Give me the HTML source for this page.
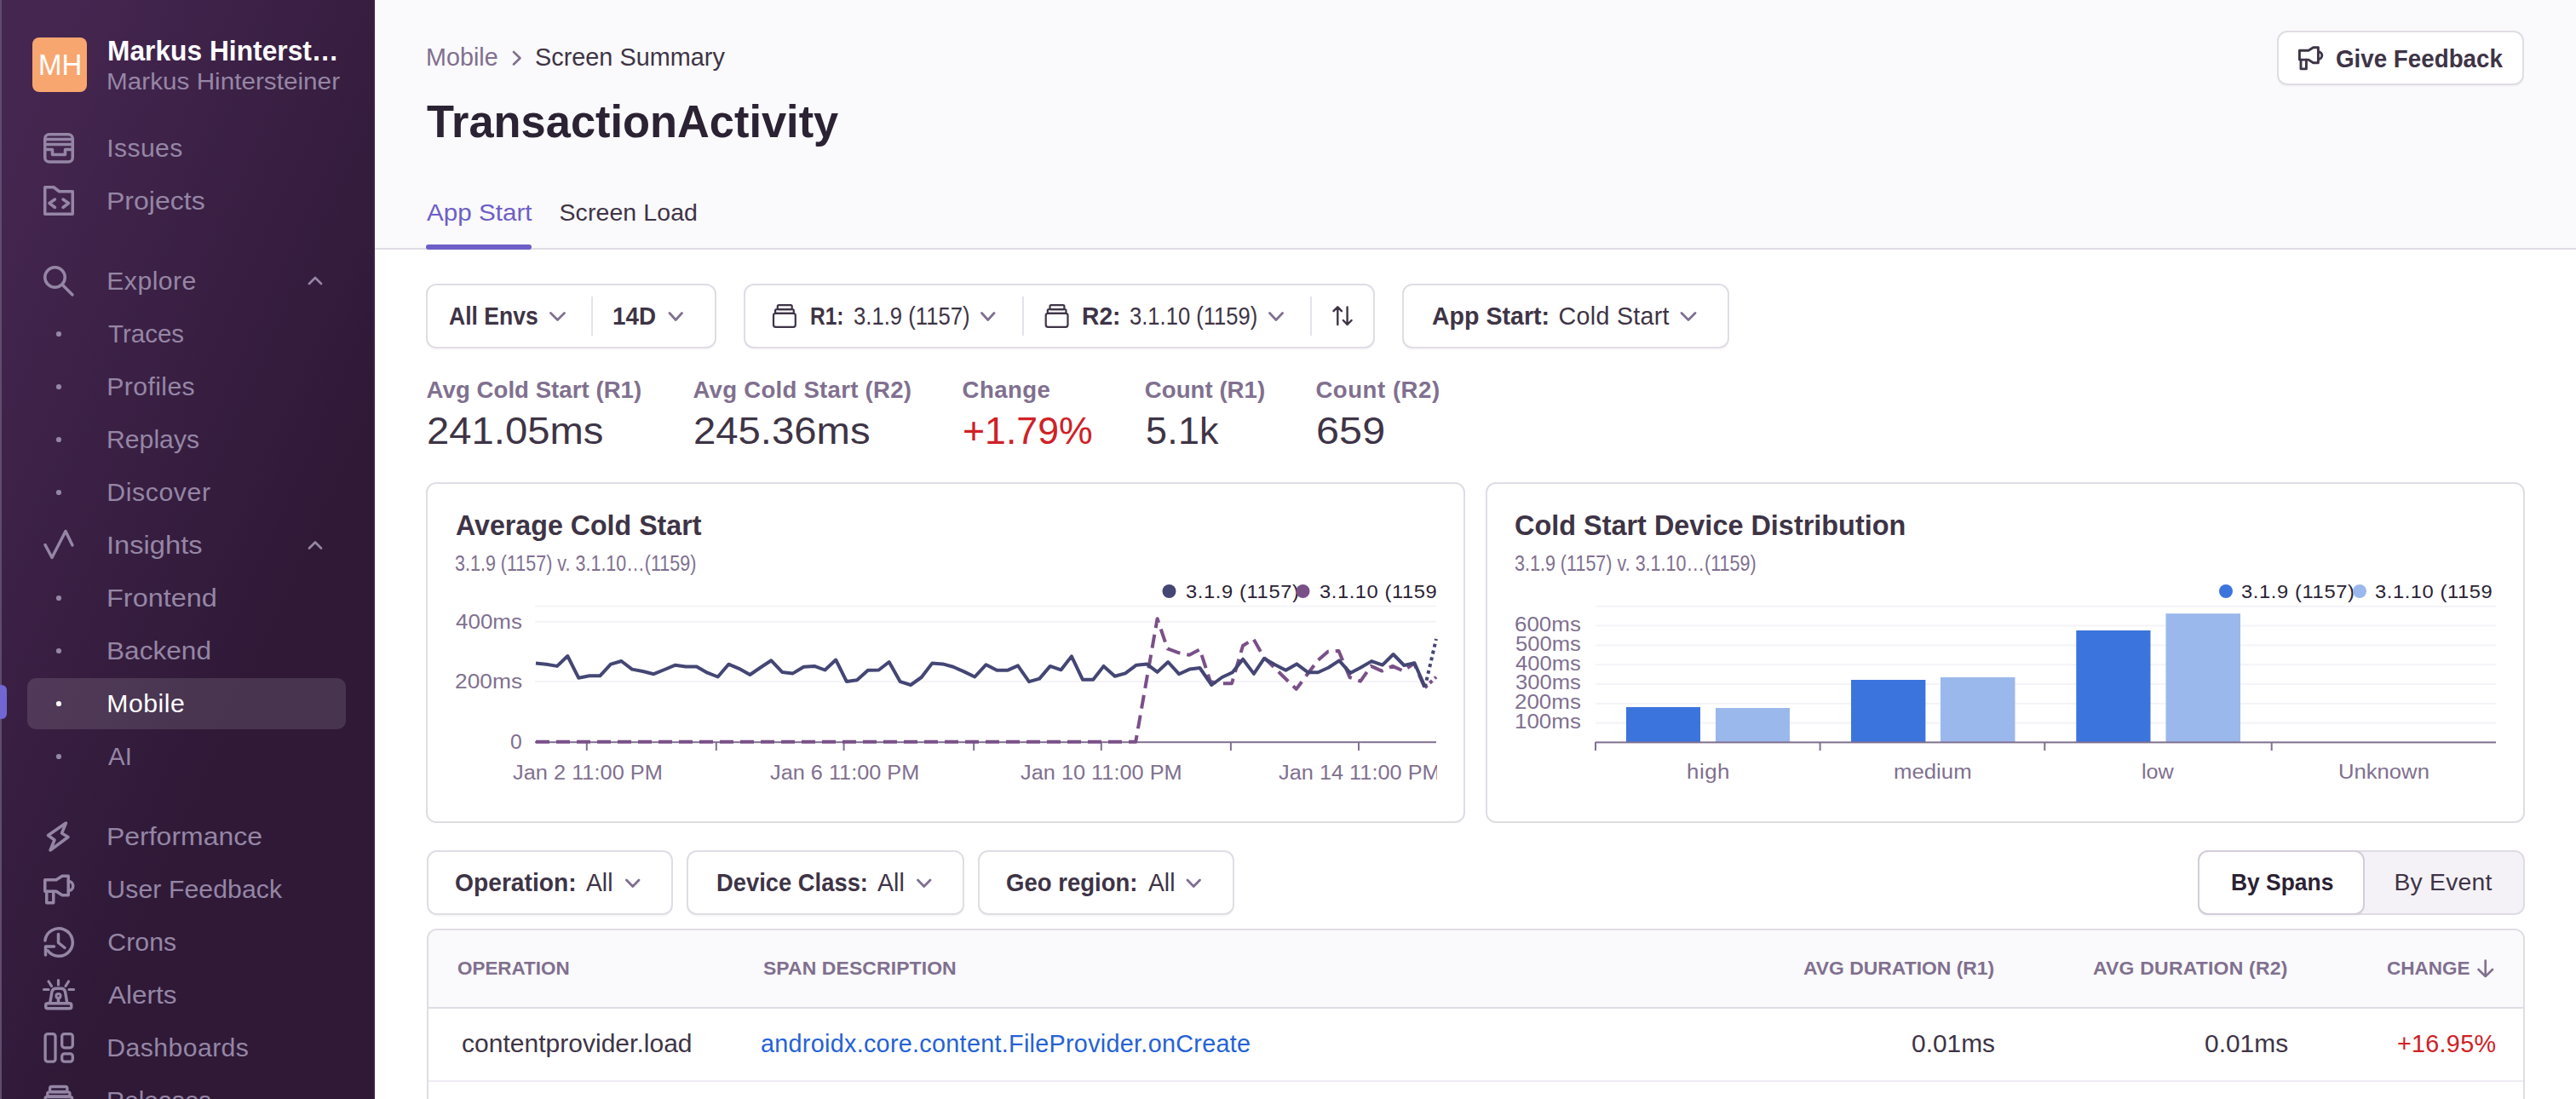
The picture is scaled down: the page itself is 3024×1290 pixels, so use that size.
<!DOCTYPE html>
<html><head><meta charset="utf-8"><title>TransactionActivity</title>
<style>
html,body{margin:0;padding:0;}
body{width:3024px;height:1290px;overflow:hidden;position:relative;background:#ffffff;font-family:"Liberation Sans",sans-serif;}
.t{position:absolute;white-space:nowrap;}
.ov{position:absolute;left:0;top:0;z-index:2;pointer-events:none;}
.box{position:absolute;box-sizing:border-box;border:2px solid #e0dce5;border-radius:12px;background:#fff;}
.btn{box-shadow:0 2px 1px rgba(43,34,51,0.03);}

</style></head>
<body>
<div style="position:absolute;left:0;top:0;width:440px;height:1290px;background:linear-gradient(294.17deg,#2f1937 35.57%,#452650 92.42%,#452650 92.42%);"></div>
<div style="position:absolute;left:0;top:0;width:2px;height:1290px;background:#5f4c6e;"></div>
<div style="position:absolute;left:438px;top:0;width:2px;height:1290px;background:#3a2145;"></div>
<div style="position:absolute;left:38px;top:44px;width:64px;height:64px;border-radius:8px;background:#f8a670;"></div>
<div style="position:absolute;left:32px;top:796px;width:374px;height:60px;border-radius:10px;background:rgba(255,255,255,0.12);"></div>
<div style="position:absolute;left:0;top:804px;width:8px;height:40px;border-radius:0 6px 6px 0;background:#7266d4;"></div>
<div style="position:absolute;left:440px;top:0;width:2584px;height:291px;background:#faf9fb;"></div>
<div style="position:absolute;left:440px;top:291px;width:2584px;height:2px;background:#e0dce5;"></div>
<div style="position:absolute;left:500px;top:287px;width:124px;height:6px;border-radius:3px;background:#6c5fc7;"></div>
<div class="box btn" style="left:2673px;top:36px;width:290px;height:64px;"></div>
<div class="box btn" style="left:500px;top:333px;width:341px;height:76px;"></div>
<div class="box btn" style="left:873px;top:333px;width:741px;height:76px;"></div>
<div class="box btn" style="left:1646px;top:333px;width:384px;height:76px;"></div>
<div class="box" style="left:500px;top:566px;width:1220px;height:400px;"></div>
<div class="box" style="left:1744px;top:566px;width:1220px;height:400px;"></div>
<div class="box btn" style="left:501px;top:998px;width:289px;height:76px;"></div>
<div class="box btn" style="left:806px;top:998px;width:326px;height:76px;"></div>
<div class="box btn" style="left:1148px;top:998px;width:301px;height:76px;"></div>
<div class="box" style="left:2580px;top:998px;width:384px;height:76px;background:#f4f2f6;"></div>
<div class="box btn" style="left:2580px;top:998px;width:196px;height:76px;border-color:#d3cdd9;"></div>
<div class="box" style="left:501px;top:1090px;width:2463px;height:260px;border-radius:12px;"></div>
<div style="position:absolute;left:503px;top:1092px;width:2459px;height:91px;border-radius:10px 10px 0 0;background:#faf9fb;"></div>
<div style="position:absolute;left:503px;top:1182px;width:2459px;height:2px;background:#e0dce5;"></div>
<div style="position:absolute;left:503px;top:1268px;width:2459px;height:2px;background:#f0ecf3;"></div>

<svg class="ov" width="3024" height="1290" viewBox="0 0 3024 1290">
<g fill="none" stroke="#9586a5" stroke-width="3.5" stroke-linecap="round" stroke-linejoin="round">
<rect x="52.75" y="157.75" width="32.5" height="32.25" rx="5"/>
<path d="M52.75 163.5H85.25M52.75 169.5H85.25M52.75 175.5H61.5V181.5H76.5V175.5H85.25"/>
<path d="M52.75 251.25V219.75H63L69.5 224.75H85.25V251.25Z"/>
<path d="M64.5 234L58 238.5L64.5 243.5M74 234L80.5 238.5L74 243.5"/>
<circle cx="64.5" cy="325.5" r="11.75"/><path d="M73.5 334.5L85 346"/>
<path d="M53 639.5L61 654.5L77 623.5L85 640"/>
<path d="M77.5 966L56.5 980.5L64 986L59 998L80 982.5L72.5 978Z"/>
<path d="M52.75 1032.75H66L73 1028.25H80.25V1050.75H73L66 1046.25H52.75Z"/><path d="M54.75 1046.25V1059.75H62.75V1046.25"/><path d="M80.25 1034.5A5.5 5.5 0 0 1 80.25 1045.5"/>
<path d="M52.9 1104A16.25 16.25 0 1 1 56 1115.8"/><path d="M53.5 1121V1111H63.5"/><path d="M68.5 1096.5V1106.5L76 1112.5"/>
<rect x="53.75" y="1177.75" width="30" height="6" rx="2"/><path d="M58.75 1177L61 1164Q61.8 1160.25 66 1160.25H71.5Q75.7 1160.25 76.5 1164L78.75 1177"/><circle cx="68.5" cy="1169" r="2.6" stroke-width="3"/><path d="M68.5 1172V1176"/>
<path d="M51.5 1161.5H57M81 1161.5H86.5M57 1152L60.5 1157.5M68.5 1150.5V1156M80.5 1152L77 1157.5" stroke-width="3.2"/>
</g>
<g fill="none" stroke="#9586a5" stroke-width="3.3">
<rect x="53.1" y="1213.6" width="11.9" height="32.6" rx="3"/><rect x="72.7" y="1213.6" width="12.6" height="16.2" rx="3"/><rect x="72.7" y="1236.9" width="12.6" height="9.3" rx="3"/>
<rect x="58.6" y="1275.5" width="20.3" height="6" rx="2"/><rect x="55.7" y="1281.8" width="26.3" height="5" rx="2"/><rect x="53.1" y="1287.5" width="31.5" height="10" rx="2"/>
</g>
<circle cx="69" cy="392" r="3.1" fill="#9586a5"/>
<circle cx="69" cy="454" r="3.1" fill="#9586a5"/>
<circle cx="69" cy="516" r="3.1" fill="#9586a5"/>
<circle cx="69" cy="578" r="3.1" fill="#9586a5"/>
<circle cx="69" cy="702" r="3.1" fill="#9586a5"/>
<circle cx="69" cy="764" r="3.1" fill="#9586a5"/>
<circle cx="69" cy="888" r="3.1" fill="#9586a5"/>
<circle cx="69" cy="826" r="3.1" fill="#ffffff"/>
<path d="M363 333L370 326L377 333M363 643.5L370 636.5L377 643.5" fill="none" stroke="#9586a5" stroke-width="2.7" stroke-linecap="round" stroke-linejoin="round"/>
<path d="M603 61L610.5 68.2L603 75.5" fill="none" stroke="#80708f" stroke-width="2.6" stroke-linecap="round" stroke-linejoin="round"/>
<g transform="translate(2698 54.3) scale(0.8) translate(-51 -1026.5)" fill="none" stroke="#3e3446" stroke-width="3.6" stroke-linecap="round" stroke-linejoin="round"><path d="M52.75 1032.75H66L73 1028.25H80.25V1050.75H73L66 1046.25H52.75Z"/><path d="M54.75 1046.25V1059.75H62.75V1046.25"/><path d="M80.25 1034.5A5.5 5.5 0 0 1 80.25 1045.5"/></g>
<path d="M646.5 367.5L654.5 375.5L662.5 367.5 M786 367.5L793.25 375.5L800.5 367.5 M1152.5 367.5L1159.75 375.5L1167 367.5 M1490.5 367.5L1498.0 375.5L1505.5 367.5 M1974 367.5L1982.0 375.5L1990 367.5 M735.5 1033L742.75 1040.5L750 1033 M1077.5 1033L1084.75 1040.5L1092 1033 M1394 1033L1401.25 1040.5L1408.5 1033" fill="none" stroke="#80708f" stroke-width="2.8" stroke-linecap="round" stroke-linejoin="round"/>
<rect x="694" y="348" width="2" height="46" fill="#e6e2ea"/>
<rect x="1200" y="348" width="2" height="46" fill="#e6e2ea"/>
<rect x="1538" y="348" width="2" height="46" fill="#e6e2ea"/>
<g fill="none" stroke="#3e3446" stroke-width="2.2" stroke-linejoin="round"><rect x="912.8" y="358.1" width="16.9" height="5" rx="1.5"/><rect x="910.1" y="363.1" width="21.7" height="4.7" rx="1.5"/><rect x="908" y="367.8" width="25.8" height="16" rx="2.5"/></g>
<g fill="none" stroke="#3e3446" stroke-width="2.2" stroke-linejoin="round"><rect x="1232.5" y="358.1" width="16.9" height="5" rx="1.5"/><rect x="1229.8" y="363.1" width="21.7" height="4.7" rx="1.5"/><rect x="1227.7" y="367.8" width="25.8" height="16" rx="2.5"/></g>
<path d="M1570.3 381V360.5M1565.5 365.2L1570.3 360.3L1575 365.2M1581.6 360.5V381M1576.8 376L1581.6 381L1586.6 376" fill="none" stroke="#3e3446" stroke-width="2.4" stroke-linecap="round" stroke-linejoin="round"/>
<rect x="628" y="710.5" width="1058" height="2" fill="#f5f3f7"/>
<rect x="628" y="728.8" width="1058" height="2" fill="#f5f3f7"/>
<rect x="628" y="799" width="1058" height="2" fill="#f5f3f7"/>
<rect x="628" y="870.2" width="1058" height="2" fill="#80708f"/>
<rect x="687.8" y="871" width="2" height="10" fill="#80708f"/>
<rect x="839.8" y="871" width="2" height="10" fill="#80708f"/>
<rect x="989.6" y="871" width="2" height="10" fill="#80708f"/>
<rect x="1142.2" y="871" width="2" height="10" fill="#80708f"/>
<rect x="1291.8" y="871" width="2" height="10" fill="#80708f"/>
<rect x="1443.9" y="871" width="2" height="10" fill="#80708f"/>
<rect x="1594" y="871" width="2" height="10" fill="#80708f"/>
<polyline points="629,870.8 1333.2,870.8 1358.6,726.2 1370.5,761.4 1384,766.3 1396.3,768.8 1408.5,762.2 1420.8,800 1433,802.3 1446,802.3 1459,758 1471.4,750 1484,772 1521.7,808.9 1546.9,775.3 1559,764.7 1571.5,763.9 1584.4,795 1597,799.6 1609.6,781.9 1622.2,787.6 1634.8,781.9 1647.4,787.6 1660,778.6 1672.6,807.3" fill="none" stroke="#7a5088" stroke-width="4" stroke-dasharray="16 8" stroke-linejoin="round"/>
<polyline points="1672.6,807.3 1686,794.6" fill="none" stroke="#7a5088" stroke-width="4" stroke-dasharray="4 4"/>
<polyline points="629,778.6 641.3,779.7 654,781.9 666.3,770 679.3,795.8 692,793.3 704.3,793.3 717,779.7 729.4,776 742,785.6 754.6,788 767.4,791.2 780,786 792.8,780.7 805,782.4 817.8,782.4 830.4,789.7 842.7,794.5 855.3,779.7 867.6,784.8 880.4,792 892.8,783.5 905.4,775.3 918.2,788.9 930.8,790.4 943.5,782.7 956.1,781.9 968.4,786.5 981.2,774.5 993.8,799.9 1006.1,798.2 1018.9,786.8 1031.5,786.5 1043.7,777 1056.8,800.2 1069.1,804 1081.7,795 1094.2,778.6 1106.8,779.4 1119,782.7 1131.7,788.4 1144.3,794.5 1157.6,780.2 1170.3,786.8 1182.6,786.8 1194.9,781.4 1208,800.2 1220.2,796.6 1232.8,781.9 1245.6,786.3 1257.9,770.4 1271,797.8 1283.3,797.8 1295.6,781.9 1308.7,793.8 1321,790.4 1334,780.7 1346.3,779.4 1358.6,788.9 1371.2,777 1384,791.2 1396.3,785.6 1408.5,784 1422.3,804 1434.6,795 1446.8,789.2 1459.1,773.7 1471.9,790.9 1484,772.9 1496.8,780.2 1509.4,786.8 1522.2,779.4 1535.3,789.2 1547.2,789.2 1559.8,783.5 1572.1,775.3 1585.2,790.1 1597.5,783.5 1610.1,776.1 1622.9,780.6 1635.6,768 1648.3,781 1660.5,778.3 1672.8,806.4" fill="none" stroke="#444674" stroke-width="4" stroke-linejoin="round"/>
<polyline points="1672.8,806.4 1686,750" fill="none" stroke="#444674" stroke-width="4" stroke-dasharray="4 4"/>
<circle cx="1372.5" cy="694" r="8" fill="#444674"/><circle cx="1529.5" cy="694" r="8" fill="#7a5088"/>
<rect x="1687" y="885" width="28" height="40" fill="#ffffff"/>
<rect x="1873" y="847.6" width="1057" height="2" fill="#f5f3f7"/>
<rect x="1873" y="824.8" width="1057" height="2" fill="#f5f3f7"/>
<rect x="1873" y="802.0" width="1057" height="2" fill="#f5f3f7"/>
<rect x="1873" y="779.2" width="1057" height="2" fill="#f5f3f7"/>
<rect x="1873" y="756.4" width="1057" height="2" fill="#f5f3f7"/>
<rect x="1873" y="733.5" width="1057" height="2" fill="#f5f3f7"/>
<rect x="1873" y="710.7" width="1057" height="2" fill="#f5f3f7"/>
<rect x="1909" y="830" width="87.0" height="41.4" fill="#3c74dd"/>
<rect x="2173" y="798" width="87.4" height="73.4" fill="#3c74dd"/>
<rect x="2437.3" y="740" width="87.2" height="131.4" fill="#3c74dd"/>
<rect x="2014" y="831" width="87.0" height="40.4" fill="#9bb8ec"/>
<rect x="2278" y="795" width="87.5" height="76.4" fill="#9bb8ec"/>
<rect x="2542.5" y="720.2" width="87.5" height="151.2" fill="#9bb8ec"/>
<rect x="1873" y="870.4" width="1057" height="2" fill="#80708f"/>
<rect x="1872" y="871" width="2" height="10" fill="#80708f"/>
<rect x="2135.6" y="871" width="2" height="10" fill="#80708f"/>
<rect x="2399.3" y="871" width="2" height="10" fill="#80708f"/>
<rect x="2665.7" y="871" width="2" height="10" fill="#80708f"/>
<circle cx="2613" cy="694" r="8" fill="#3c74dd"/><circle cx="2770" cy="694" r="8" fill="#9bb8ec"/>
<path d="M2917.7 1127.5V1146M2909.5 1138L2917.7 1146.2L2926 1138" fill="none" stroke="#80708f" stroke-width="2.6" stroke-linecap="round" stroke-linejoin="round"/>
</svg>
<div class="t" style="left:44.6px;top:59.4px;font-size:34.30px;line-height:34.30px;letter-spacing:0.00px;color:#ffffff;transform:scaleX(0.9615);transform-origin:0 0;">MH</div>
<div class="t" style="left:125.8px;top:42.8px;font-size:32.99px;line-height:32.99px;letter-spacing:0.00px;color:#ffffff;font-weight:700;transform:scaleX(0.9622);transform-origin:0 0;">Markus Hinterst…</div>
<div class="t" style="left:125.4px;top:80.6px;font-size:28.20px;line-height:28.20px;letter-spacing:0.00px;color:#9586a5;transform:scaleX(1.0538);transform-origin:0 0;">Markus Hintersteiner</div>
<div class="t" style="left:125.3px;top:159.1px;font-size:30.23px;line-height:30.23px;letter-spacing:0.35px;color:#9586a5;">Issues</div>
<div class="t" style="left:125.2px;top:221.1px;font-size:30.23px;line-height:30.23px;letter-spacing:0.00px;color:#9586a5;transform:scaleX(1.0603);transform-origin:0 0;">Projects</div>
<div class="t" style="left:125.3px;top:315.1px;font-size:30.23px;line-height:30.23px;letter-spacing:0.42px;color:#9586a5;">Explore</div>
<div class="t" style="left:127.3px;top:377.1px;font-size:30.23px;line-height:30.23px;letter-spacing:0.00px;color:#9586a5;transform:scaleX(0.9767);transform-origin:0 0;">Traces</div>
<div class="t" style="left:125.3px;top:439.1px;font-size:30.23px;line-height:30.23px;letter-spacing:0.38px;color:#9586a5;">Profiles</div>
<div class="t" style="left:125.3px;top:501.1px;font-size:30.23px;line-height:30.23px;letter-spacing:0.00px;color:#9586a5;transform:scaleX(0.9994);transform-origin:0 0;">Replays</div>
<div class="t" style="left:125.3px;top:563.1px;font-size:30.23px;line-height:30.23px;letter-spacing:0.59px;color:#9586a5;">Discover</div>
<div class="t" style="left:125.1px;top:625.1px;font-size:30.23px;line-height:30.23px;letter-spacing:0.01px;color:#9586a5;transform:scaleX(1.0800);transform-origin:0 0;">Insights</div>
<div class="t" style="left:125.2px;top:687.1px;font-size:30.23px;line-height:30.23px;letter-spacing:0.00px;color:#9586a5;transform:scaleX(1.0739);transform-origin:0 0;">Frontend</div>
<div class="t" style="left:125.2px;top:749.1px;font-size:30.23px;line-height:30.23px;letter-spacing:-0.00px;color:#9586a5;transform:scaleX(1.0458);transform-origin:0 0;">Backend</div>
<div class="t" style="left:125.3px;top:811.1px;font-size:30.23px;line-height:30.23px;letter-spacing:0.50px;color:#ffffff;">Mobile</div>
<div class="t" style="left:127.3px;top:873.1px;font-size:30.23px;line-height:30.23px;letter-spacing:0.00px;color:#9586a5;transform:scaleX(0.9749);transform-origin:0 0;">AI</div>
<div class="t" style="left:125.2px;top:967.1px;font-size:30.23px;line-height:30.23px;letter-spacing:0.00px;color:#9586a5;transform:scaleX(1.0577);transform-origin:0 0;">Performance</div>
<div class="t" style="left:125.3px;top:1029.1px;font-size:30.23px;line-height:30.23px;letter-spacing:0.08px;color:#9586a5;">User Feedback</div>
<div class="t" style="left:126.3px;top:1091.1px;font-size:30.23px;line-height:30.23px;letter-spacing:0.05px;color:#9586a5;">Crons</div>
<div class="t" style="left:127.3px;top:1153.1px;font-size:30.23px;line-height:30.23px;letter-spacing:0.00px;color:#9586a5;transform:scaleX(1.0410);transform-origin:0 0;">Alerts</div>
<div class="t" style="left:125.3px;top:1215.1px;font-size:30.23px;line-height:30.23px;letter-spacing:0.41px;color:#9586a5;">Dashboards</div>
<div class="t" style="left:125.3px;top:1277.1px;font-size:30.23px;line-height:30.23px;letter-spacing:0.00px;color:#9586a5;transform:scaleX(0.9768);transform-origin:0 0;">Releases</div>
<div class="t" style="left:499.8px;top:53.1px;font-size:29.07px;line-height:29.07px;letter-spacing:0.00px;color:#80708f;transform:scaleX(0.9885);transform-origin:0 0;">Mobile</div>
<div class="t" style="left:627.5px;top:53.1px;font-size:29.07px;line-height:29.07px;letter-spacing:0.00px;color:#3e3446;transform:scaleX(0.9926);transform-origin:0 0;">Screen Summary</div>
<div class="t" style="left:501.0px;top:116.3px;font-size:54.36px;line-height:54.36px;letter-spacing:0.00px;color:#2b2233;font-weight:700;transform:scaleX(0.9636);transform-origin:0 0;">TransactionActivity</div>
<div class="t" style="left:500.5px;top:235.1px;font-size:28.49px;line-height:28.49px;letter-spacing:0.00px;color:#6c5fc7;transform:scaleX(1.0398);transform-origin:0 0;">App Start</div>
<div class="t" style="left:656.5px;top:235.1px;font-size:28.49px;line-height:28.49px;letter-spacing:0.09px;color:#3e3446;">Screen Load</div>
<div class="t" style="left:2741.6px;top:53.8px;font-size:30.09px;line-height:30.09px;letter-spacing:0.00px;color:#3e3446;font-weight:700;transform:scaleX(0.9225);transform-origin:0 0;">Give Feedback</div>
<div class="t" style="left:526.6px;top:356.9px;font-size:28.63px;line-height:28.63px;letter-spacing:0.00px;color:#3e3446;font-weight:700;transform:scaleX(0.9274);transform-origin:0 0;">All Envs</div>
<div class="t" style="left:718.6px;top:356.9px;font-size:28.63px;line-height:28.63px;letter-spacing:0.00px;color:#3e3446;font-weight:700;transform:scaleX(0.9717);transform-origin:0 0;">14D</div>
<div class="t" style="left:950.6px;top:356.9px;font-size:28.63px;line-height:28.63px;letter-spacing:0.00px;color:#3e3446;font-weight:700;transform:scaleX(0.8570);transform-origin:0 0;">R1:</div>
<div class="t" style="left:1002.1px;top:356.9px;font-size:28.63px;line-height:28.63px;letter-spacing:0.00px;color:#3e3446;transform:scaleX(0.8978);transform-origin:0 0;">3.1.9 (1157)</div>
<div class="t" style="left:1270.0px;top:356.9px;font-size:28.63px;line-height:28.63px;letter-spacing:0.00px;color:#3e3446;font-weight:700;transform:scaleX(0.9861);transform-origin:0 0;">R2:</div>
<div class="t" style="left:1326.1px;top:356.9px;font-size:28.63px;line-height:28.63px;letter-spacing:0.00px;color:#3e3446;transform:scaleX(0.8936);transform-origin:0 0;">3.1.10 (1159)</div>
<div class="t" style="left:1681.0px;top:356.9px;font-size:28.63px;line-height:28.63px;letter-spacing:0.00px;color:#3e3446;font-weight:700;transform:scaleX(0.9977);transform-origin:0 0;">App Start:</div>
<div class="t" style="left:1829.6px;top:356.9px;font-size:28.63px;line-height:28.63px;letter-spacing:0.30px;color:#3e3446;">Cold Start</div>
<div class="t" style="left:500.6px;top:444.1px;font-size:27.62px;line-height:27.62px;letter-spacing:0.03px;color:#80708f;font-weight:700;">Avg Cold Start (R1)</div>
<div class="t" style="left:813.4px;top:444.1px;font-size:27.62px;line-height:27.62px;letter-spacing:0.25px;color:#80708f;font-weight:700;">Avg Cold Start (R2)</div>
<div class="t" style="left:1129.6px;top:444.1px;font-size:27.62px;line-height:27.62px;letter-spacing:0.38px;color:#80708f;font-weight:700;">Change</div>
<div class="t" style="left:1343.8px;top:444.1px;font-size:27.62px;line-height:27.62px;letter-spacing:0.03px;color:#80708f;font-weight:700;">Count (R1)</div>
<div class="t" style="left:1544.4px;top:444.1px;font-size:27.62px;line-height:27.62px;letter-spacing:0.52px;color:#80708f;font-weight:700;">Count (R2)</div>
<div class="t" style="left:500.9px;top:484.3px;font-size:44.91px;line-height:44.91px;letter-spacing:0.00px;color:#3e3446;transform:scaleX(1.0518);transform-origin:0 0;">241.05ms</div>
<div class="t" style="left:813.8px;top:484.3px;font-size:44.91px;line-height:44.91px;letter-spacing:0.00px;color:#3e3446;transform:scaleX(1.0523);transform-origin:0 0;">245.36ms</div>
<div class="t" style="left:1129.8px;top:484.3px;font-size:44.91px;line-height:44.91px;letter-spacing:0.00px;color:#cf2126;transform:scaleX(0.9945);transform-origin:0 0;">+1.79%</div>
<div class="t" style="left:1345.1px;top:484.3px;font-size:44.91px;line-height:44.91px;letter-spacing:0.19px;color:#3e3446;">5.1k</div>
<div class="t" style="left:1544.8px;top:484.3px;font-size:44.91px;line-height:44.91px;letter-spacing:0.09px;color:#3e3446;transform:scaleX(1.0800);transform-origin:0 0;">659</div>
<div class="t" style="left:534.7px;top:599.6px;font-size:33.43px;line-height:33.43px;letter-spacing:0.00px;color:#3e3446;font-weight:700;transform:scaleX(0.9626);transform-origin:0 0;">Average Cold Start</div>
<div class="t" style="left:534.2px;top:648.2px;font-size:26.60px;line-height:26.60px;letter-spacing:0.00px;color:#80708f;transform:scaleX(0.8088);transform-origin:0 0;">3.1.9 (1157) v. 3.1.10…(1159)</div>
<div class="t" style="left:1778.0px;top:599.6px;font-size:33.43px;line-height:33.43px;letter-spacing:0.00px;color:#3e3446;font-weight:700;transform:scaleX(0.9700);transform-origin:0 0;">Cold Start Device Distribution</div>
<div class="t" style="left:1778.2px;top:648.2px;font-size:26.60px;line-height:26.60px;letter-spacing:0.00px;color:#80708f;transform:scaleX(0.8097);transform-origin:0 0;">3.1.9 (1157) v. 3.1.10…(1159)</div>
<div class="t" style="left:1391.6px;top:683.9px;font-size:21.95px;line-height:21.95px;letter-spacing:0.58px;color:#2b2233;transform:scaleX(1.0800);transform-origin:0 0;">3.1.9 (1157)</div>
<div class="t" style="left:1548.6px;top:683.9px;font-size:21.95px;line-height:21.95px;letter-spacing:0.54px;color:#2b2233;transform:scaleX(1.0800);transform-origin:0 0;">3.1.10 (1159</div>
<div class="t" style="left:2631.0px;top:683.9px;font-size:21.95px;line-height:21.95px;letter-spacing:0.58px;color:#2b2233;transform:scaleX(1.0800);transform-origin:0 0;">3.1.9 (1157)</div>
<div class="t" style="left:2788.0px;top:683.9px;font-size:21.95px;line-height:21.95px;letter-spacing:0.54px;color:#2b2233;transform:scaleX(1.0800);transform-origin:0 0;">3.1.10 (1159</div>
<div class="t" style="left:534.7px;top:717.5px;font-size:24.71px;line-height:24.71px;letter-spacing:-0.00px;color:#80708f;transform:scaleX(1.0521);transform-origin:0 0;">400ms</div>
<div class="t" style="left:533.6px;top:788.2px;font-size:24.71px;line-height:24.71px;letter-spacing:0.00px;color:#80708f;transform:scaleX(1.0666);transform-origin:0 0;">200ms</div>
<div class="t" style="left:599.0px;top:858.8px;font-size:24.71px;line-height:24.71px;letter-spacing:0.00px;color:#80708f;">0</div>
<div class="t" style="left:601.6px;top:895.0px;font-size:23.98px;line-height:23.98px;letter-spacing:0.00px;color:#80708f;transform:scaleX(1.0588);transform-origin:0 0;">Jan 2 11:00 PM</div>
<div class="t" style="left:903.8px;top:895.0px;font-size:23.98px;line-height:23.98px;letter-spacing:0.00px;color:#80708f;transform:scaleX(1.0552);transform-origin:0 0;">Jan 6 11:00 PM</div>
<div class="t" style="left:1198.4px;top:895.0px;font-size:23.98px;line-height:23.98px;letter-spacing:-0.00px;color:#80708f;transform:scaleX(1.0571);transform-origin:0 0;">Jan 10 11:00 PM</div>
<div class="t" style="left:1500.8px;top:895.0px;font-size:23.98px;line-height:23.98px;letter-spacing:-0.00px;color:#80708f;transform:scaleX(1.0571);transform-origin:0 0;">Jan 14 11:00 PM</div>
<div class="t" style="left:1778.3px;top:721.3px;font-size:24.71px;line-height:24.71px;letter-spacing:0.00px;color:#80708f;transform:scaleX(1.0501);transform-origin:0 0;">600ms</div>
<div class="t" style="left:1779.4px;top:744.2px;font-size:24.71px;line-height:24.71px;letter-spacing:0.00px;color:#80708f;transform:scaleX(1.0359);transform-origin:0 0;">500ms</div>
<div class="t" style="left:1779.4px;top:767.2px;font-size:24.71px;line-height:24.71px;letter-spacing:0.00px;color:#80708f;transform:scaleX(1.0359);transform-origin:0 0;">400ms</div>
<div class="t" style="left:1779.4px;top:788.8px;font-size:24.71px;line-height:24.71px;letter-spacing:0.00px;color:#80708f;transform:scaleX(1.0359);transform-origin:0 0;">300ms</div>
<div class="t" style="left:1778.3px;top:811.8px;font-size:24.71px;line-height:24.71px;letter-spacing:0.00px;color:#80708f;transform:scaleX(1.0501);transform-origin:0 0;">200ms</div>
<div class="t" style="left:1778.3px;top:834.8px;font-size:24.71px;line-height:24.71px;letter-spacing:0.00px;color:#80708f;transform:scaleX(1.0501);transform-origin:0 0;">100ms</div>
<div class="t" style="left:1979.6px;top:893.9px;font-size:23.98px;line-height:23.98px;letter-spacing:0.46px;color:#80708f;transform:scaleX(1.0800);transform-origin:0 0;">high</div>
<div class="t" style="left:2223.4px;top:893.9px;font-size:23.98px;line-height:23.98px;letter-spacing:0.00px;color:#80708f;transform:scaleX(1.0747);transform-origin:0 0;">medium</div>
<div class="t" style="left:2513.6px;top:893.9px;font-size:23.98px;line-height:23.98px;letter-spacing:0.00px;color:#80708f;transform:scaleX(1.0489);transform-origin:0 0;">low</div>
<div class="t" style="left:2744.7px;top:893.9px;font-size:23.98px;line-height:23.98px;letter-spacing:0.00px;color:#80708f;transform:scaleX(1.0697);transform-origin:0 0;">Unknown</div>
<div class="t" style="left:534.0px;top:1021.7px;font-size:29.07px;line-height:29.07px;letter-spacing:0.00px;color:#3e3446;font-weight:700;transform:scaleX(0.9710);transform-origin:0 0;">Operation:</div>
<div class="t" style="left:688.0px;top:1021.7px;font-size:29.07px;line-height:29.07px;letter-spacing:0.00px;color:#3e3446;transform:scaleX(0.9727);transform-origin:0 0;">All</div>
<div class="t" style="left:840.6px;top:1021.7px;font-size:29.07px;line-height:29.07px;letter-spacing:0.00px;color:#3e3446;font-weight:700;transform:scaleX(0.9415);transform-origin:0 0;">Device Class:</div>
<div class="t" style="left:1030.0px;top:1021.7px;font-size:29.07px;line-height:29.07px;letter-spacing:0.00px;color:#3e3446;transform:scaleX(0.9825);transform-origin:0 0;">All</div>
<div class="t" style="left:1181.1px;top:1021.7px;font-size:29.07px;line-height:29.07px;letter-spacing:0.00px;color:#3e3446;font-weight:700;transform:scaleX(0.9473);transform-origin:0 0;">Geo region:</div>
<div class="t" style="left:1347.6px;top:1021.7px;font-size:29.07px;line-height:29.07px;letter-spacing:0.00px;color:#3e3446;transform:scaleX(0.9727);transform-origin:0 0;">All</div>
<div class="t" style="left:2618.7px;top:1021.1px;font-size:28.34px;line-height:28.34px;letter-spacing:0.00px;color:#2b2233;font-weight:700;transform:scaleX(0.9321);transform-origin:0 0;">By Spans</div>
<div class="t" style="left:2810.4px;top:1021.1px;font-size:28.34px;line-height:28.34px;letter-spacing:0.24px;color:#3e3446;">By Event</div>
<div class="t" style="left:537.3px;top:1125.4px;font-size:22.97px;line-height:22.97px;letter-spacing:0.00px;color:#80708f;font-weight:700;transform:scaleX(0.9764);transform-origin:0 0;">OPERATION</div>
<div class="t" style="left:895.9px;top:1125.4px;font-size:22.97px;line-height:22.97px;letter-spacing:0.09px;color:#80708f;font-weight:700;">SPAN DESCRIPTION</div>
<div class="t" style="left:2117.3px;top:1125.4px;font-size:22.97px;line-height:22.97px;letter-spacing:0.00px;color:#80708f;font-weight:700;transform:scaleX(0.9964);transform-origin:0 0;">AVG DURATION (R1)</div>
<div class="t" style="left:2457.0px;top:1125.4px;font-size:22.97px;line-height:22.97px;letter-spacing:0.21px;color:#80708f;font-weight:700;">AVG DURATION (R2)</div>
<div class="t" style="left:2801.8px;top:1125.4px;font-size:22.97px;line-height:22.97px;letter-spacing:0.00px;color:#80708f;font-weight:700;transform:scaleX(0.9803);transform-origin:0 0;">CHANGE</div>
<div class="t" style="left:542.1px;top:1210.8px;font-size:28.78px;line-height:28.78px;letter-spacing:0.00px;color:#3e3446;transform:scaleX(1.0444);transform-origin:0 0;">contentprovider.load</div>
<div class="t" style="left:893.0px;top:1210.8px;font-size:28.78px;line-height:28.78px;letter-spacing:0.29px;color:#2562d4;">androidx.core.content.FileProvider.onCreate</div>
<div class="t" style="left:2244.3px;top:1210.8px;font-size:28.78px;line-height:28.78px;letter-spacing:-0.00px;color:#3e3446;transform:scaleX(1.0393);transform-origin:0 0;">0.01ms</div>
<div class="t" style="left:2588.0px;top:1210.8px;font-size:28.78px;line-height:28.78px;letter-spacing:-0.00px;color:#3e3446;transform:scaleX(1.0404);transform-origin:0 0;">0.01ms</div>
<div class="t" style="left:2814.0px;top:1210.8px;font-size:28.78px;line-height:28.78px;letter-spacing:0.27px;color:#cf2126;">+16.95%</div>
<script>(function(){var w=window.innerWidth;if(w&&Math.abs(w-3024)>4){document.documentElement.style.zoom=w/3024;}})();</script>
</body></html>
